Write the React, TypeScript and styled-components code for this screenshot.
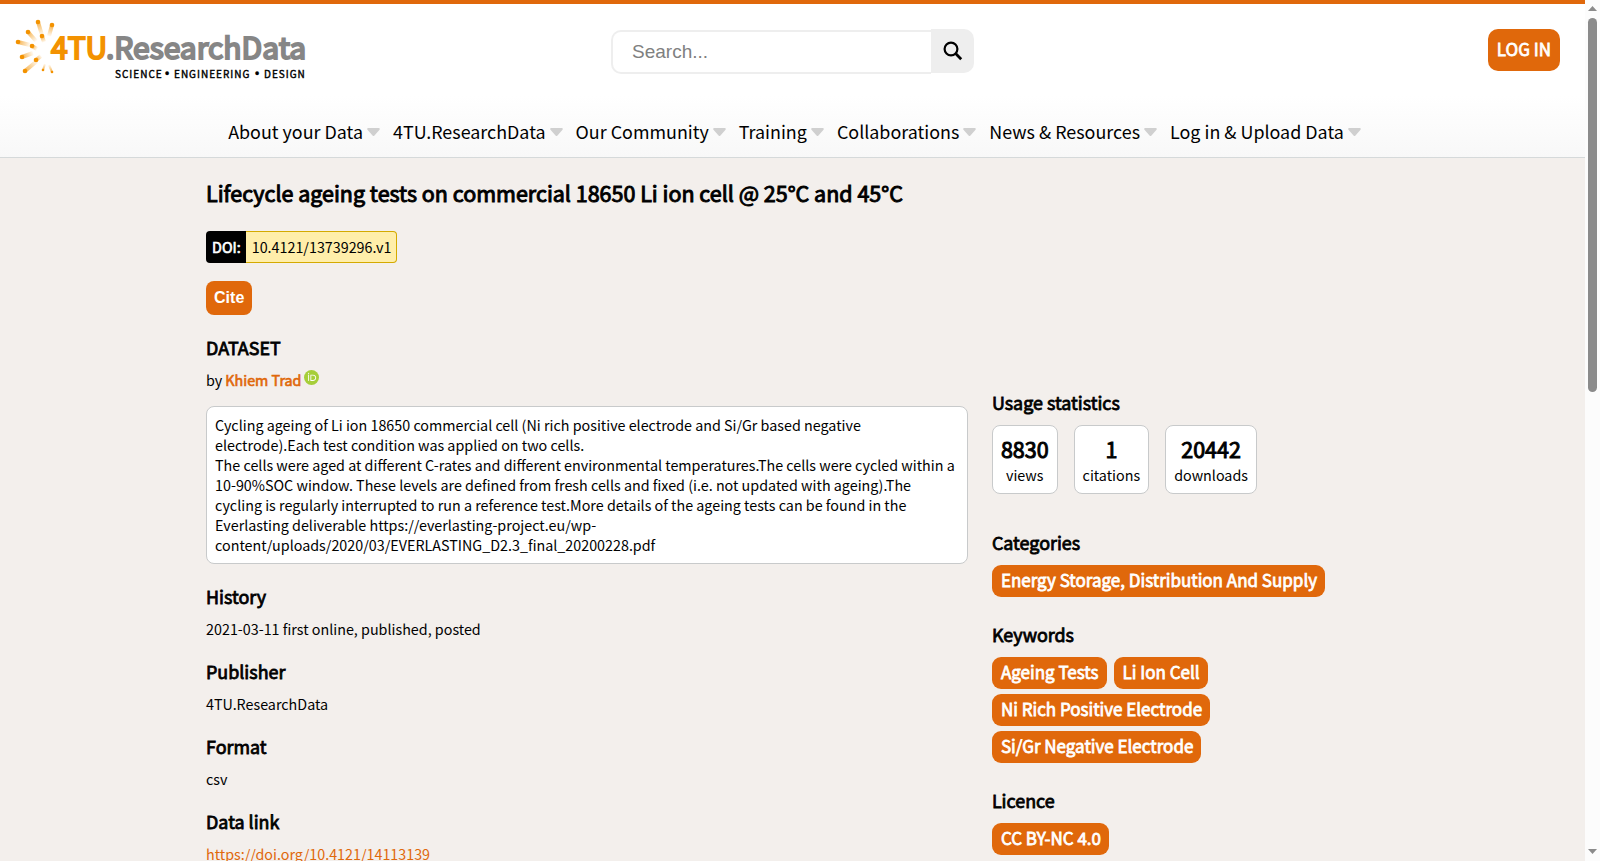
import React from "react";
import styled, { createGlobalStyle, css } from "styled-components";

const orange = "#e0680b";
const sans = `"Noto Sans CJK SC", "Noto Sans", sans-serif`;

const GlobalStyle = createGlobalStyle`
  *, *::before, *::after { box-sizing: border-box; }
  body {
    margin: 0;
    background: #f3efec;
    color: #000;
    font-family: ${sans};
    font-size: 16px;
    font-size-adjust: 0.486;
    line-height: 20px;
  }
  h1, h2, p { margin: 0; }
  a { color: ${orange}; text-decoration: none; }
`;

/* Heavier strokes on the regular face, keeping its letter widths. */
const emphasis = css`
  font-weight: 400;
  -webkit-text-stroke: 0.04em currentColor;
`;

const Shell = styled.div`
  display: flex;
  height: 100vh;
  overflow: hidden;
`;

const Page = styled.div`
  flex: 1;
  min-width: 0;
  overflow: hidden;
`;

const Header = styled.header`
  border-top: 4px solid ${orange};
  border-bottom: 1px solid #d5d9da;
  background: linear-gradient(#fff 60%, #f8f8f8);
`;

const TopRow = styled.div`
  display: grid;
  grid-template-columns: 1fr auto 1fr;
  align-items: start;
  height: 104px;
  padding: 12px 12px 0;
`;

const LogoLink = styled.a`
  display: block;
  width: 300px;
`;

const SearchForm = styled.form`
  display: flex;
  align-items: flex-start;
  padding-top: 13px;
`;

const SearchInput = styled.input`
  width: 320px;
  height: 44px;
  margin-top: 1px;
  padding: 0 18px 0 19px;
  border: 2px solid #eee;
  border-right: 0;
  border-radius: 10px 0 0 10px;
  background: #fff;
  font: 19px "Liberation Sans", Arial, sans-serif;
  &::placeholder { color: #808080; opacity: 1; }
`;

const SearchButton = styled.button`
  display: flex;
  align-items: center;
  justify-content: center;
  width: 43px;
  height: 44px;
  padding: 0;
  border: 0;
  border-radius: 0 10px 10px 0;
  background: #eee;
`;

const LoginLink = styled.a`
  ${emphasis}
  justify-self: end;
  margin: 13px 13px 0 0;
  padding: 8px 9px 10px;
  border-radius: 10px;
  background: ${orange};
  color: #fff;
  font-size: 19px;
  line-height: 24px;
`;

const Nav = styled.nav`
  display: flex;
  justify-content: center;
  gap: 13px;
  height: 49px;
  padding: 11px 0 0 4px;
`;

const NavItem = styled.a`
  display: flex;
  align-items: center;
  gap: 4px;
  height: 24px;
  color: #000;
  font-size: 20px;
  white-space: nowrap;
`;

const Main = styled.main`
  padding: 23px 13% 0;
`;

const Title = styled.h1`
  ${emphasis}
  font-size: 24px;
  line-height: 24px;
`;

const Doi = styled.div`
  display: flex;
  width: max-content;
  height: 32px;
  margin-top: 26px;
  line-height: 32px;
`;

const DoiLabel = styled.span`
  ${emphasis}
  padding: 0 5px 0 6px;
  border-radius: 4px 0 0 4px;
  background: #000;
  color: #fff;
`;

const DoiValue = styled.span`
  padding: 0 5px 0 6px;
  border: 1px solid #d4aa00;
  border-left: 0;
  border-radius: 0 4px 4px 0;
  background: #fea;
  line-height: 30px;
`;

const CiteButton = styled.button`
  height: 34px;
  margin-top: 18px;
  padding: 0 8px;
  border: 0;
  border-radius: 8px;
  background: ${orange};
  color: #fff;
  font: bold 16px "Liberation Sans", Arial, sans-serif;
`;

const Columns = styled.div`
  display: grid;
  grid-template-columns: 65% 33%;
  justify-content: space-between;
  margin-top: 20px;
`;

const Heading = styled.h2`
  ${emphasis}
  font-size: 20px;
  line-height: 24px;
`;

const Byline = styled.p`
  display: flex;
  gap: 3px;
  margin-top: 11px;
`;

const Author = styled.a`
  ${emphasis}
`;

const Description = styled.p`
  margin: 16px 0 20px;
  padding: 8px;
  border: 1px solid #c8cacb;
  border-radius: 8px;
  background: #fff;
`;

const Section = styled.section`
  margin-bottom: 20px;
`;

const SectionText = styled.p`
  margin-top: 11px;
`;

const Aside = styled.aside`
  padding-top: 55px;
`;

const Stats = styled.div`
  display: flex;
  gap: 16px;
  margin: 11px 0 36px;
`;

const Stat = styled.div`
  height: 69px;
  padding: 11px 8px 0;
  border: 1px solid #c8cacb;
  border-radius: 8px;
  background: #fff;
  text-align: center;
`;

const StatNumber = styled.div`
  ${emphasis}
  margin-bottom: 4px;
  font-size: 24px;
  line-height: 24px;
`;

const Tags = styled.div`
  display: flex;
  flex-wrap: wrap;
  gap: 5px 7px;
  margin: 11px 0 25px;
`;

const Tag = styled.a`
  ${emphasis}
  height: 32px;
  padding: 0 8px 0 9px;
  border-radius: 9px;
  background: ${orange};
  color: #fff;
  font-size: 19px;
  line-height: 30px;
`;

const ScrollTrack = styled.div`
  display: flex;
  flex-direction: column;
  align-items: center;
  width: 15px;
  padding: 5px 0 6px;
  background: #fcfcfc;
`;

const ScrollThumb = styled.div`
  width: 9px;
  height: 44%;
  margin: 7px 0 auto;
  border-radius: 5px;
  background: #8b8b8b;
`;

const rays = [
  { x: 38, y: 22, r: 2, tx: 42, ty: 35 },
  { x: 52, y: 25, r: 2, tx: 49, ty: 36 },
  { x: 28, y: 32, r: 2, tx: 36, ty: 41 },
  { x: 42, y: 36, r: 2, tx: 44, ty: 42 },
  { x: 18, y: 42, r: 2, tx: 30, ty: 45 },
  { x: 32, y: 46, r: 2, tx: 37, ty: 49 },
  { x: 22, y: 57, r: 2, tx: 33, ty: 53 },
  { x: 36, y: 60, r: 2, tx: 41, ty: 56 },
  { x: 25, y: 71, r: 2, tx: 37, ty: 61 },
  { x: 43, y: 70, r: 1, tx: 45, ty: 64 },
  { x: 52, y: 72, r: 1, tx: 49, ty: 65 },
];

const LogoSvg = styled.svg`
  display: block;
  font-family: ${sans};
  font-size-adjust: none;
`;

const LogoName = styled.text`
  font-size: 30px;
  stroke-width: 2px;
`;

const LogoTagline = styled.text`
  font-size: 10px;
  letter-spacing: 1px;
  stroke: #000;
  stroke-width: 0.04em;
`;

const LogoDot = styled.tspan`
  font-family: "Liberation Sans", sans-serif;
  font-size: 12px;
`;

const Logo = () => (
  <LogoSvg width="300" height="70" viewBox="12 16 300 70" role="img" aria-label="4TU.ResearchData">
    <defs>
      {rays.map((ray, i) => (
        <linearGradient key={i} id={`ray${i}`} gradientUnits="userSpaceOnUse" x1={ray.x} y1={ray.y} x2={ray.tx} y2={ray.ty}>
          <stop offset="0" stopColor="#f39200" stopOpacity="0.7" />
          <stop offset="1" stopColor="#f39200" stopOpacity="0.05" />
        </linearGradient>
      ))}
    </defs>
    {rays.map((ray, i) => (
      <g key={i}>
        <line x1={ray.x} y1={ray.y} x2={ray.tx} y2={ray.ty} stroke={`url(#ray${i})`} strokeWidth={ray.r * 2} />
        <circle cx={ray.x} cy={ray.y} r={ray.r + 0.3} fill="#f39200" />
      </g>
    ))}
    <LogoName x="51" y="59" fill="#f39200" stroke="#f39200">4TU</LogoName>
    <LogoName x="106" y="59" fill="#868686" stroke="#868686">.ResearchData</LogoName>
    <LogoTagline y="78">
      <tspan x="115">SCIENCE</tspan>
      <LogoDot x="165">•</LogoDot>
      <tspan x="174">ENGINEERING</tspan>
      <LogoDot x="255">•</LogoDot>
      <tspan x="264">DESIGN</tspan>
    </LogoTagline>
  </LogoSvg>
);

const SearchIcon = () => (
  <svg width="20" height="20" viewBox="0 0 20 20" fill="none" stroke="#000" aria-hidden="true">
    <circle cx="8" cy="8" r="6.4" strokeWidth="2.2" />
    <path d="M12.6 12.6 L18.2 18.2" strokeWidth="2.8" />
  </svg>
);

const Caret = () => (
  <svg width="13" height="9" viewBox="0 0 13 9" aria-hidden="true">
    <path d="M1.200 2H11.800L6.500 8Z" fill="#d0d0d0" stroke="#d0d0d0" strokeWidth="2" strokeLinejoin="round" />
  </svg>
);

const OrcidIcon = () => (
  <svg width="15" height="15" viewBox="0 0 256 256" role="img" aria-label="ORCID">
    <circle cx="128" cy="128" r="128" fill="#a6ce39" />
    <g fill="#fff">
      <rect x="71" y="79" width="15" height="107" />
      <circle cx="78.500" cy="56.800" r="10" />
      <path d="M109 79h41.600c39.600 0 57 28.300 57 53.600 0 27.500-21.500 53.600-56.800 53.600H109V79zm15.400 93.300h24.500c34.900 0 42.900-26.500 42.900-39.700 0-21.500-13.700-39.700-43.700-39.700h-23.700v79.400z" />
    </g>
  </svg>
);

const ScrollArrow = ({ down = false }: { down?: boolean }) => (
  <svg width="9" height="6" viewBox="0 0 9 6" aria-hidden="true">
    <path d={down ? "M0 0H9L4.500 5Z" : "M0 6H9L4.500 1Z"} fill="#8b8b8b" />
  </svg>
);

const menu = [
  "About your Data",
  "4TU.ResearchData",
  "Our Community",
  "Training",
  "Collaborations",
  "News & Resources",
  "Log in & Upload Data",
];

const stats = [
  { value: "8830", label: "views" },
  { value: "1", label: "citations" },
  { value: "20442", label: "downloads" },
];

const tagGroups = [
  { title: "Categories", tags: ["Energy Storage, Distribution And Supply"] },
  {
    title: "Keywords",
    tags: ["Ageing Tests", "Li Ion Cell", "Ni Rich Positive Electrode", "Si/Gr Negative Electrode"],
  },
  { title: "Licence", tags: ["CC BY-NC 4.0"] },
];

const details = [
  { title: "History", body: "2021-03-11 first online, published, posted" },
  { title: "Publisher", body: "4TU.ResearchData" },
  { title: "Format", body: "csv" },
  { title: "Data link", body: <a href="https://doi.org/10.4121/14113139">https://doi.org/10.4121/14113139</a> },
];

export default function App() {
  return (
    <>
      <GlobalStyle />
      <Shell>
        <Page>
          <Header>
            <TopRow>
              <LogoLink href="/"><Logo /></LogoLink>
              <SearchForm role="search">
                <SearchInput type="text" placeholder="Search..." aria-label="Search" />
                <SearchButton type="submit" aria-label="Submit search"><SearchIcon /></SearchButton>
              </SearchForm>
              <LoginLink href="/login">LOG IN</LoginLink>
            </TopRow>
            <Nav>
              {menu.map((item) => (
                <NavItem href="#" key={item}>{item}<Caret /></NavItem>
              ))}
            </Nav>
          </Header>
          <Main>
            <Title>Lifecycle ageing tests on commercial 18650 Li ion cell @ 25°C and 45°C</Title>
            <Doi>
              <DoiLabel>DOI:</DoiLabel>
              <DoiValue>10.4121/13739296.v1</DoiValue>
            </Doi>
            <CiteButton type="button">Cite</CiteButton>
            <Columns>
              <div>
                <Heading>DATASET</Heading>
                <Byline>
                  <span>by</span>
                  <Author href="#">Khiem Trad</Author>
                  <OrcidIcon />
                </Byline>
                <Description>
                  Cycling ageing of Li ion 18650 commercial cell (Ni rich positive electrode and Si/Gr based negative
                  electrode).Each test condition was applied on two cells.
                  <br />
                  The cells were aged at different C-rates and different environmental temperatures.The cells were
                  cycled within a 10-90%SOC window. These levels are defined from fresh cells and fixed (i.e. not
                  updated with ageing).The cycling is regularly interrupted to run a reference test.More details of the
                  ageing tests can be found in the Everlasting deliverable
                  https://everlasting-project.eu/wp-content/uploads/2020/03/EVERLASTING_D2.3_final_20200228.pdf
                </Description>
                {details.map(({ title, body }) => (
                  <Section key={title}>
                    <Heading>{title}</Heading>
                    <SectionText>{body}</SectionText>
                  </Section>
                ))}
              </div>
              <Aside>
                <Heading>Usage statistics</Heading>
                <Stats>
                  {stats.map(({ value, label }) => (
                    <Stat key={label}>
                      <StatNumber>{value}</StatNumber>
                      {label}
                    </Stat>
                  ))}
                </Stats>
                {tagGroups.map(({ title, tags }) => (
                  <section key={title}>
                    <Heading>{title}</Heading>
                    <Tags>
                      {tags.map((tag) => <Tag href="#" key={tag}>{tag}</Tag>)}
                    </Tags>
                  </section>
                ))}
              </Aside>
            </Columns>
          </Main>
        </Page>
        <ScrollTrack aria-hidden="true">
          <ScrollArrow />
          <ScrollThumb />
          <ScrollArrow down />
        </ScrollTrack>
      </Shell>
    </>
  );
}
